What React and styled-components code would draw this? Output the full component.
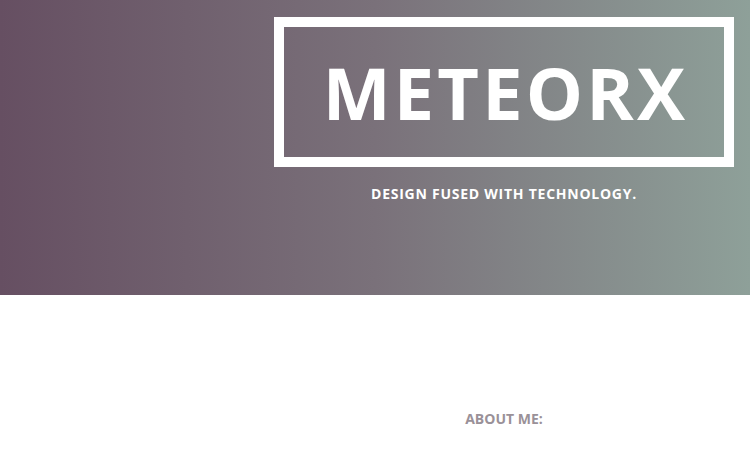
import styled, { createGlobalStyle } from 'styled-components'

const GlobalStyle = createGlobalStyle`
    body {
        margin: 0;
        background: #ffffff;
        font-family: "Open Sans", "Liberation Sans", sans-serif;
    }
`

const Header = styled.header`
    display: grid;
    grid-template-columns: 258px 1fr;
    height: 295px;
    background: linear-gradient(to right, #664f62 0%, #7a717a 50%, #8ea099 100%);
`

const Column = styled.div`
    grid-column: 2;
    display: flex;
    flex-direction: column;
    align-items: center;
    padding-top: 17px;
`

const LogoBox = styled.div`
    box-sizing: border-box;
    width: 460px;
    height: 150px;
    border: 10px solid #ffffff;
    display: flex;
    align-items: center;
    justify-content: center;
`

const Logo = styled.h1`
    margin: 0 0 0 3px;
    color: #ffffff;
    font-size: 72px;
    font-weight: 700;
    letter-spacing: 3.2px;
    line-height: 1;
`

const Tagline = styled.p`
    margin: 17px 0 0;
    color: #ffffff;
    font-size: 14px;
    font-weight: 700;
    letter-spacing: 0.75px;
`

const About = styled.section`
    display: grid;
    grid-template-columns: 258px 1fr;
    padding-top: 114px;
`

const SectionTitle = styled.h2`
    grid-column: 2;
    margin: 0;
    text-align: center;
    color: #9a9198;
    font-size: 14px;
    font-weight: 700;
`

const App = () => {
    return (
        <>
            <GlobalStyle />
            <Header>
                <Column>
                    <LogoBox>
                        <Logo>METEORX</Logo>
                    </LogoBox>
                    <Tagline>DESIGN FUSED WITH TECHNOLOGY.</Tagline>
                </Column>
            </Header>
            <About>
                <SectionTitle>ABOUT ME:</SectionTitle>
            </About>
        </>
    )
}

export default App
